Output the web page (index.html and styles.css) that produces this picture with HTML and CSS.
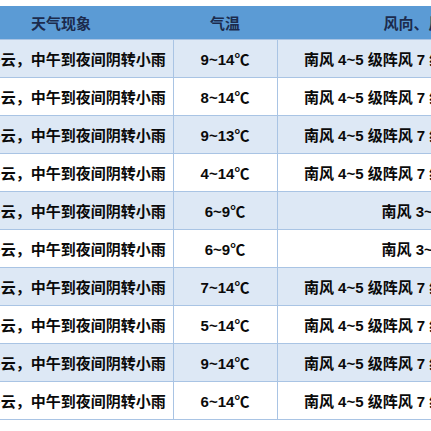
FILE: index.html
```html
<!DOCTYPE html>
<html lang="zh-CN">
<head>
<meta charset="utf-8">
<link rel="stylesheet" href="styles.css">
</head>
<body>
<table class="wx">
  <colgroup>
    <col class="c1"><col class="c2"><col class="c3">
  </colgroup>
  <thead>
    <tr><th>天气现象</th><th>气温</th><th>风向、风力</th></tr>
  </thead>
  <tbody>
    <tr><td>晴到多云，中午到夜间阴转小雨</td><td>9~14℃</td><td>南风 4~5 级阵风 7 级转东风 5~6 级</td></tr>
    <tr><td>晴到多云，中午到夜间阴转小雨</td><td>8~14℃</td><td>南风 4~5 级阵风 7 级转东风 5~6 级</td></tr>
    <tr><td>晴到多云，中午到夜间阴转小雨</td><td>9~13℃</td><td>南风 4~5 级阵风 7 级转东风 5~6 级</td></tr>
    <tr><td>晴到多云，中午到夜间阴转小雨</td><td>4~14℃</td><td>南风 4~5 级阵风 7 级转东风 5~6 级</td></tr>
    <tr><td>晴到多云，中午到夜间阴转小雨</td><td>6~9℃</td><td>南风 3~4 级</td></tr>
    <tr><td>晴到多云，中午到夜间阴转小雨</td><td>6~9℃</td><td>南风 3~4 级</td></tr>
    <tr><td>晴到多云，中午到夜间阴转小雨</td><td>7~14℃</td><td>南风 4~5 级阵风 7 级转东风 5~6 级</td></tr>
    <tr><td>晴到多云，中午到夜间阴转小雨</td><td>5~14℃</td><td>南风 4~5 级阵风 7 级转东风 5~6 级</td></tr>
    <tr><td>晴到多云，中午到夜间阴转小雨</td><td>9~14℃</td><td>南风 4~5 级阵风 7 级转东风 5~6 级</td></tr>
    <tr><td>晴到多云，中午到夜间阴转小雨</td><td>6~14℃</td><td>南风 4~5 级阵风 7 级转东风 5~6 级</td></tr>
  </tbody>
</table>
</body>
</html>
```

FILE: styles.css
```css
html, body {
  margin: 0;
  padding: 0;
  overflow: hidden;
  background: #ffffff;
  width: 431px;
  height: 431px;
}
body {
  padding-top: 6px;
  font-family: "Liberation Sans", "Noto Sans CJK SC", sans-serif;
}
.wx {
  border-collapse: collapse;
  table-layout: fixed;
  width: 616px;
  margin-left: -51px;
}
.c1 { width: 224px; }
.c2 { width: 104px; }
.c3 { width: 288px; }
.wx th {
  background: #5b9bd5;
  color: #1c2b4d;
  font-weight: 700;
  font-size: 15px;
  height: 33px;
  padding: 0;
  text-align: center;
  white-space: nowrap;
  border: none;
}
.wx td {
  height: 37px;
  padding: 0;
  text-align: center;
  white-space: nowrap;
  font-size: 15px;
  font-weight: 700;
  color: #0a0a0a;
  border: 1px solid #a9c4e4;
  overflow: hidden;
}
.wx td:first-child { border-left: none; }
.wx tbody tr:nth-child(odd) td { background: #dde8f5; }
.wx tbody tr:nth-child(even) td { background: #ffffff; }
```
